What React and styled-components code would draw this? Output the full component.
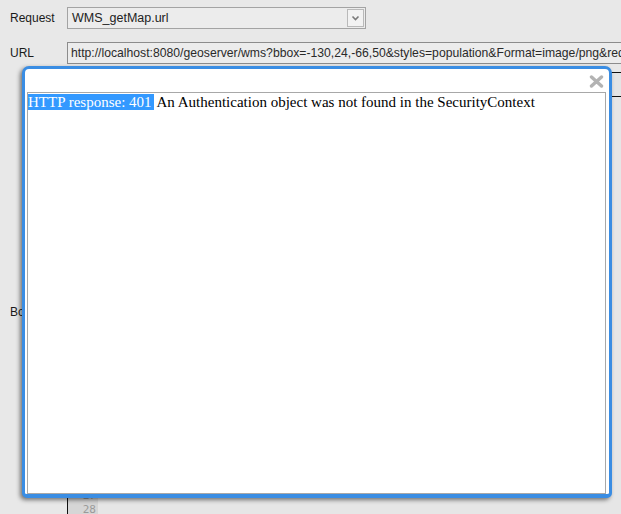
import React from "react";
import styled, { createGlobalStyle } from "styled-components";

const Global = createGlobalStyle`
  html, body { margin: 0; padding: 0; overflow: hidden; background: #e8e8e8; }
  body { font-family: "Liberation Sans", Arial, sans-serif; font-size: 12px; color: #222; }
  #root { width: 621px; height: 514px; overflow: hidden; position: relative; }
`;

const Form = styled.div`
  display: grid;
  grid-template-columns: 67px 1fr;
  row-gap: 13px;
  padding-top: 7px;
  align-items: center;
`;

const Label = styled.label`
  padding-left: 10px;
  font-size: 12px;
  color: #1a1a1a;
  align-self: center;
`;

const Select = styled.div`
  width: 299px;
  height: 22px;
  box-sizing: border-box;
  border: 1px solid #a3a3a3;
  background: #ececec;
  display: flex;
  align-items: center;
  padding-left: 4px;
  font-size: 12.5px;
  color: #222;
`;

const SelectText = styled.span`
  flex: 1;
`;

const DropButton = styled.span`
  width: 17px;
  height: 18px;
  margin-right: 1px;
  box-sizing: border-box;
  border: 1px solid #b9b9b9;
  background: #f2f2f2;
  display: flex;
  align-items: center;
  justify-content: center;
`;

const UrlInput = styled.div`
  height: 22px;
  box-sizing: border-box;
  border: 1px solid #8c8c8c;
  border-right: none;
  background: #ececec;
  display: flex;
  align-items: center;
  padding-left: 3px;
  white-space: nowrap;
  overflow: hidden;
  font-size: 12.2px;
  color: #2a2a2a;
`;

const Editor = styled.div`
  height: 480px;
  margin-top: -11px;
  display: flex;
  flex-direction: column;
  border-left: 1px solid #111;
`;

const EditorTop = styled.div`
  height: 6px;
`;

const Toolbar = styled.div`
  height: 23px;
  border-top: 1px solid #111;
  border-bottom: 1px solid #111;
  background: #e4e4e4;
`;

const EditorBody = styled.div`
  flex: 1;
  display: flex;
`;

const Gutter = styled.div`
  width: 30px;
  background: #d6d6d6;
  display: flex;
  flex-direction: column;
  align-items: flex-end;
  padding: 28px 2px 0 0;
  box-sizing: border-box;
  font-family: "DejaVu Sans Mono", monospace;
  font-size: 11px;
  color: #9a9a9a;
`;

const LineNo = styled.div`
  height: 14px;
  line-height: 14px;
`;

const Code = styled.div`
  flex: 1;
  background: #e6e6e6;
`;

const Modal = styled.div`
  position: absolute;
  left: 22px;
  top: 66px;
  width: 590px;
  height: 432px;
  box-sizing: border-box;
  background: #fff;
  border: 3px solid #3a8de3;
  border-bottom-width: 4px;
  border-radius: 7px 7px 5px 5px;
  box-shadow: -2px 2px 4px rgba(0, 0, 0, 0.5);
  display: flex;
  flex-direction: column;
`;

const ModalHeader = styled.div`
  height: 22px;
  display: flex;
  align-items: center;
  justify-content: flex-end;
  padding-right: 5px;
  padding-top: 1px;
`;

const CloseButton = styled.button`
  border: none;
  background: none;
  padding: 0;
  width: 15px;
  height: 13px;
  display: flex;
  cursor: pointer;
`;

const Frame = styled.div`
  flex: 1;
  margin: 0 3px 0 2px;
  border: 1px solid #a8a8a8;
  background: #fff;
  font-family: "Liberation Serif", "Times New Roman", serif;
  font-size: 15px;
  color: #000;
  padding: 0;
  line-height: 19px;
`;

const Highlight = styled.span`
  background: #3399ff;
  color: #fff;
  padding-right: 2px;
`;

const lineNumbers = Array.from({ length: 28 }, (_, i) => i + 1);

export default function App() {
  return (
    <>
      <Global />
      <Form>
        <Label>Request</Label>
        <Select>
          <SelectText>WMS_getMap.url</SelectText>
          <DropButton>
            <svg width="9" height="6" viewBox="0 0 9 6">
              <path d="M1.5 1.5 L4.5 4.5 L7.5 1.5" fill="none" stroke="#7a7a7a" strokeWidth="1.6" />
            </svg>
          </DropButton>
        </Select>
        <Label>URL</Label>
        <UrlInput>
          http://localhost:8080/geoserver/wms?bbox=-130,24,-66,50&amp;styles=population&amp;Format=image/png&amp;request=GetMap&amp;layers=topp:states&amp;width=550&amp;height=250&amp;srs=EPSG:4326
        </UrlInput>
        <Label>Body</Label>
        <Editor>
          <EditorTop />
          <Toolbar />
          <EditorBody>
            <Gutter>
              {lineNumbers.map((n) => (
                <LineNo key={n}>{n}</LineNo>
              ))}
            </Gutter>
            <Code />
          </EditorBody>
        </Editor>
      </Form>
      <Modal>
        <ModalHeader>
          <CloseButton aria-label="Close">
            <svg width="15" height="13" viewBox="0 0 15 13">
              <path d="M2.5 2 L12.5 11 M12.5 2 L2.5 11" stroke="#b3b3b3" strokeWidth="3.4" strokeLinecap="round" />
            </svg>
          </CloseButton>
        </ModalHeader>
        <Frame>
          <Highlight>HTTP response: 401</Highlight> An Authentication object was not found in the SecurityContext
        </Frame>
      </Modal>
    </>
  );
}
